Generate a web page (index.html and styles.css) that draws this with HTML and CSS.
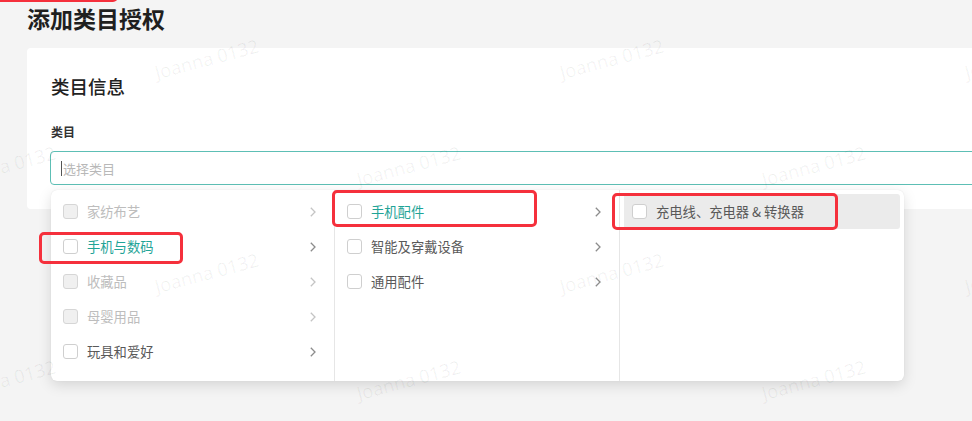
FILE: index.html
```html
<!DOCTYPE html>
<html lang="zh-CN">
<head>
<meta charset="utf-8">
<title>添加类目授权</title>
<link rel="stylesheet" href="styles.css">
</head>
<body>
<div class="page">
  <h1 class="title">添加类目授权</h1>
  <section class="card">
    <h2 class="card-title">类目信息</h2>
    <div class="field">
      <label class="field-label">类目</label>
      <div class="select">
        <div class="select-input"><span class="caret"></span><span class="placeholder">选择类目</span></div>
        <div class="cascader">
          <ul class="cas-col">
            <li class="cas-item is-disabled"><span class="cb"></span><span class="cas-text">家纺布艺</span><svg class="chev" viewBox="0 0 6 10"><path d="M0.8 0.8 L5 5 L0.8 9.2"/></svg></li>
            <li class="cas-item is-active"><span class="cb"></span><span class="cas-text">手机与数码</span><svg class="chev" viewBox="0 0 6 10"><path d="M0.8 0.8 L5 5 L0.8 9.2"/></svg></li>
            <li class="cas-item is-disabled"><span class="cb"></span><span class="cas-text">收藏品</span><svg class="chev" viewBox="0 0 6 10"><path d="M0.8 0.8 L5 5 L0.8 9.2"/></svg></li>
            <li class="cas-item is-disabled"><span class="cb"></span><span class="cas-text">母婴用品</span><svg class="chev" viewBox="0 0 6 10"><path d="M0.8 0.8 L5 5 L0.8 9.2"/></svg></li>
            <li class="cas-item"><span class="cb"></span><span class="cas-text">玩具和爱好</span><svg class="chev" viewBox="0 0 6 10"><path d="M0.8 0.8 L5 5 L0.8 9.2"/></svg></li>
          </ul>
          <ul class="cas-col">
            <li class="cas-item is-active"><span class="cb"></span><span class="cas-text">手机配件</span><svg class="chev" viewBox="0 0 6 10"><path d="M0.8 0.8 L5 5 L0.8 9.2"/></svg></li>
            <li class="cas-item"><span class="cb"></span><span class="cas-text">智能及穿戴设备</span><svg class="chev" viewBox="0 0 6 10"><path d="M0.8 0.8 L5 5 L0.8 9.2"/></svg></li>
            <li class="cas-item"><span class="cb"></span><span class="cas-text">通用配件</span><svg class="chev" viewBox="0 0 6 10"><path d="M0.8 0.8 L5 5 L0.8 9.2"/></svg></li>
          </ul>
          <ul class="cas-col">
            <li class="cas-item is-hover"><span class="cb"></span><span class="cas-text">充电线、充电器 &amp; 转换器</span></li>
          </ul>
        </div>
      </div>
    </div>
  </section>
</div>

<div class="mark mark-top"></div>
<div class="mark mark-1"></div>
<div class="mark mark-2"></div>
<div class="mark mark-3"></div>

<div class="wm-layer" aria-hidden="true">
  <div class="wm-row"><span class="wm">Joanna 0132</span><span class="wm">Joanna 0132</span><span class="wm">Joanna 0132</span></div>
  <div class="wm-row wm-shift"><span class="wm">Joanna 0132</span><span class="wm">Joanna 0132</span><span class="wm">Joanna 0132</span></div>
  <div class="wm-row"><span class="wm">Joanna 0132</span><span class="wm">Joanna 0132</span><span class="wm">Joanna 0132</span></div>
  <div class="wm-row wm-shift"><span class="wm">Joanna 0132</span><span class="wm">Joanna 0132</span><span class="wm">Joanna 0132</span></div>
</div>
</body>
</html>
```

FILE: styles.css
```css
* { box-sizing: border-box; }

html, body {
  margin: 0;
  padding: 0;
  width: 972px;
  height: 421px;
  overflow: hidden;
}

body {
  position: relative;
  background: #f4f4f4;
  font-family: "Noto Sans CJK SC", "Noto Sans", sans-serif;
  color: #333;
}

.page {
  padding-left: 27px;
}

.title {
  margin: 0 0 11px;
  font-size: 23px;
  line-height: 37px;
  font-weight: 600;
  color: #1f1f1f;
}

.card {
  width: 1000px;
  background: #fff;
  border-radius: 4px;
  padding: 26px 24px 24px;
}

.card-title {
  margin: 0 0 25px;
  font-size: 18.5px;
  line-height: 24px;
  font-weight: 500;
  color: #222;
}

.field-label {
  display: block;
  font-size: 12px;
  line-height: 18px;
  font-weight: 600;
  color: #333;
  margin-bottom: 10px;
}

.select {
  position: relative;
  margin-left: -1px;
}

.select-input {
  height: 34px;
  border: 1px solid #5dbfb5;
  border-radius: 4px;
  display: flex;
  align-items: center;
  padding-left: 10px;
  background: #fff;
}

.caret {
  width: 1px;
  height: 15px;
  background: #555;
  margin-right: 1px;
}

.placeholder {
  font-size: 13px;
  color: #b8b8b8;
}

.cascader {
  position: absolute;
  top: 39px;
  left: 1px;
  width: 853px;
  height: 191px;
  display: flex;
  background: #fff;
  border-radius: 6px;
  box-shadow: 0 4px 14px rgba(0, 0, 0, 0.13), 0 0 1px rgba(0, 0, 0, 0.12);
  z-index: 5;
}

.cas-col {
  list-style: none;
  margin: 0;
  padding: 4px;
  width: 284px;
  flex: none;
  border-right: 1px solid #e6e6e6;
}

.cas-col:nth-child(2) { width: 285px; }
.cas-col:last-child { border-right: none; }

.cas-item {
  height: 35px;
  display: flex;
  align-items: center;
  padding: 0 14px 0 8px;
  font-size: 13.3px;
  color: #595959;
  border-radius: 3px;
}

.cb {
  width: 15px;
  height: 15px;
  flex: none;
  border: 1px solid #cfcfcf;
  border-radius: 3px;
  background: #fff;
  margin-right: 9px;
}

.cas-text { flex: 1; }

.chev {
  width: 6px;
  height: 10px;
  flex: none;
  fill: none;
  stroke: #8c8c8c;
  stroke-width: 1.3;
}

.is-disabled { color: #bdbdbd; }
.is-disabled .cb { background: #f0f0f0; border-color: #d6d6d6; }
.is-disabled .chev { stroke: #c4c4c4; }

.is-active { color: #1fa497; }

.is-hover { background: #ebebeb; }

/* red annotation boxes */
.mark {
  position: absolute;
  border: 3px solid #f5303c;
  border-radius: 5px;
  z-index: 10;
  pointer-events: none;
}
.mark-top { left: -4px; top: -32px; width: 122px; height: 34px; }
.mark-1 { left: 39px; top: 232px; width: 144px; height: 32px; }
.mark-2 { left: 332px; top: 190px; width: 205px; height: 37px; }
.mark-3 { left: 612px; top: 193px; width: 226px; height: 37px; }

/* watermark */
.wm-layer {
  position: absolute;
  inset: 0;
  pointer-events: none;
  z-index: 20;
  padding-top: 5px;
  overflow: hidden;
}
.wm-row {
  display: flex;
  height: 107px;
  align-items: center;
  margin-left: 4px;
}
.wm-shift { margin-left: -199px; }
.wm {
  flex: none;
  width: 405px;
  text-align: center;
  font-family: "Open Sans", sans-serif;
  font-size: 18.5px;
  color: rgba(0, 0, 0, 0.06);
  transform: rotate(-15deg);
  white-space: nowrap;
}
```
